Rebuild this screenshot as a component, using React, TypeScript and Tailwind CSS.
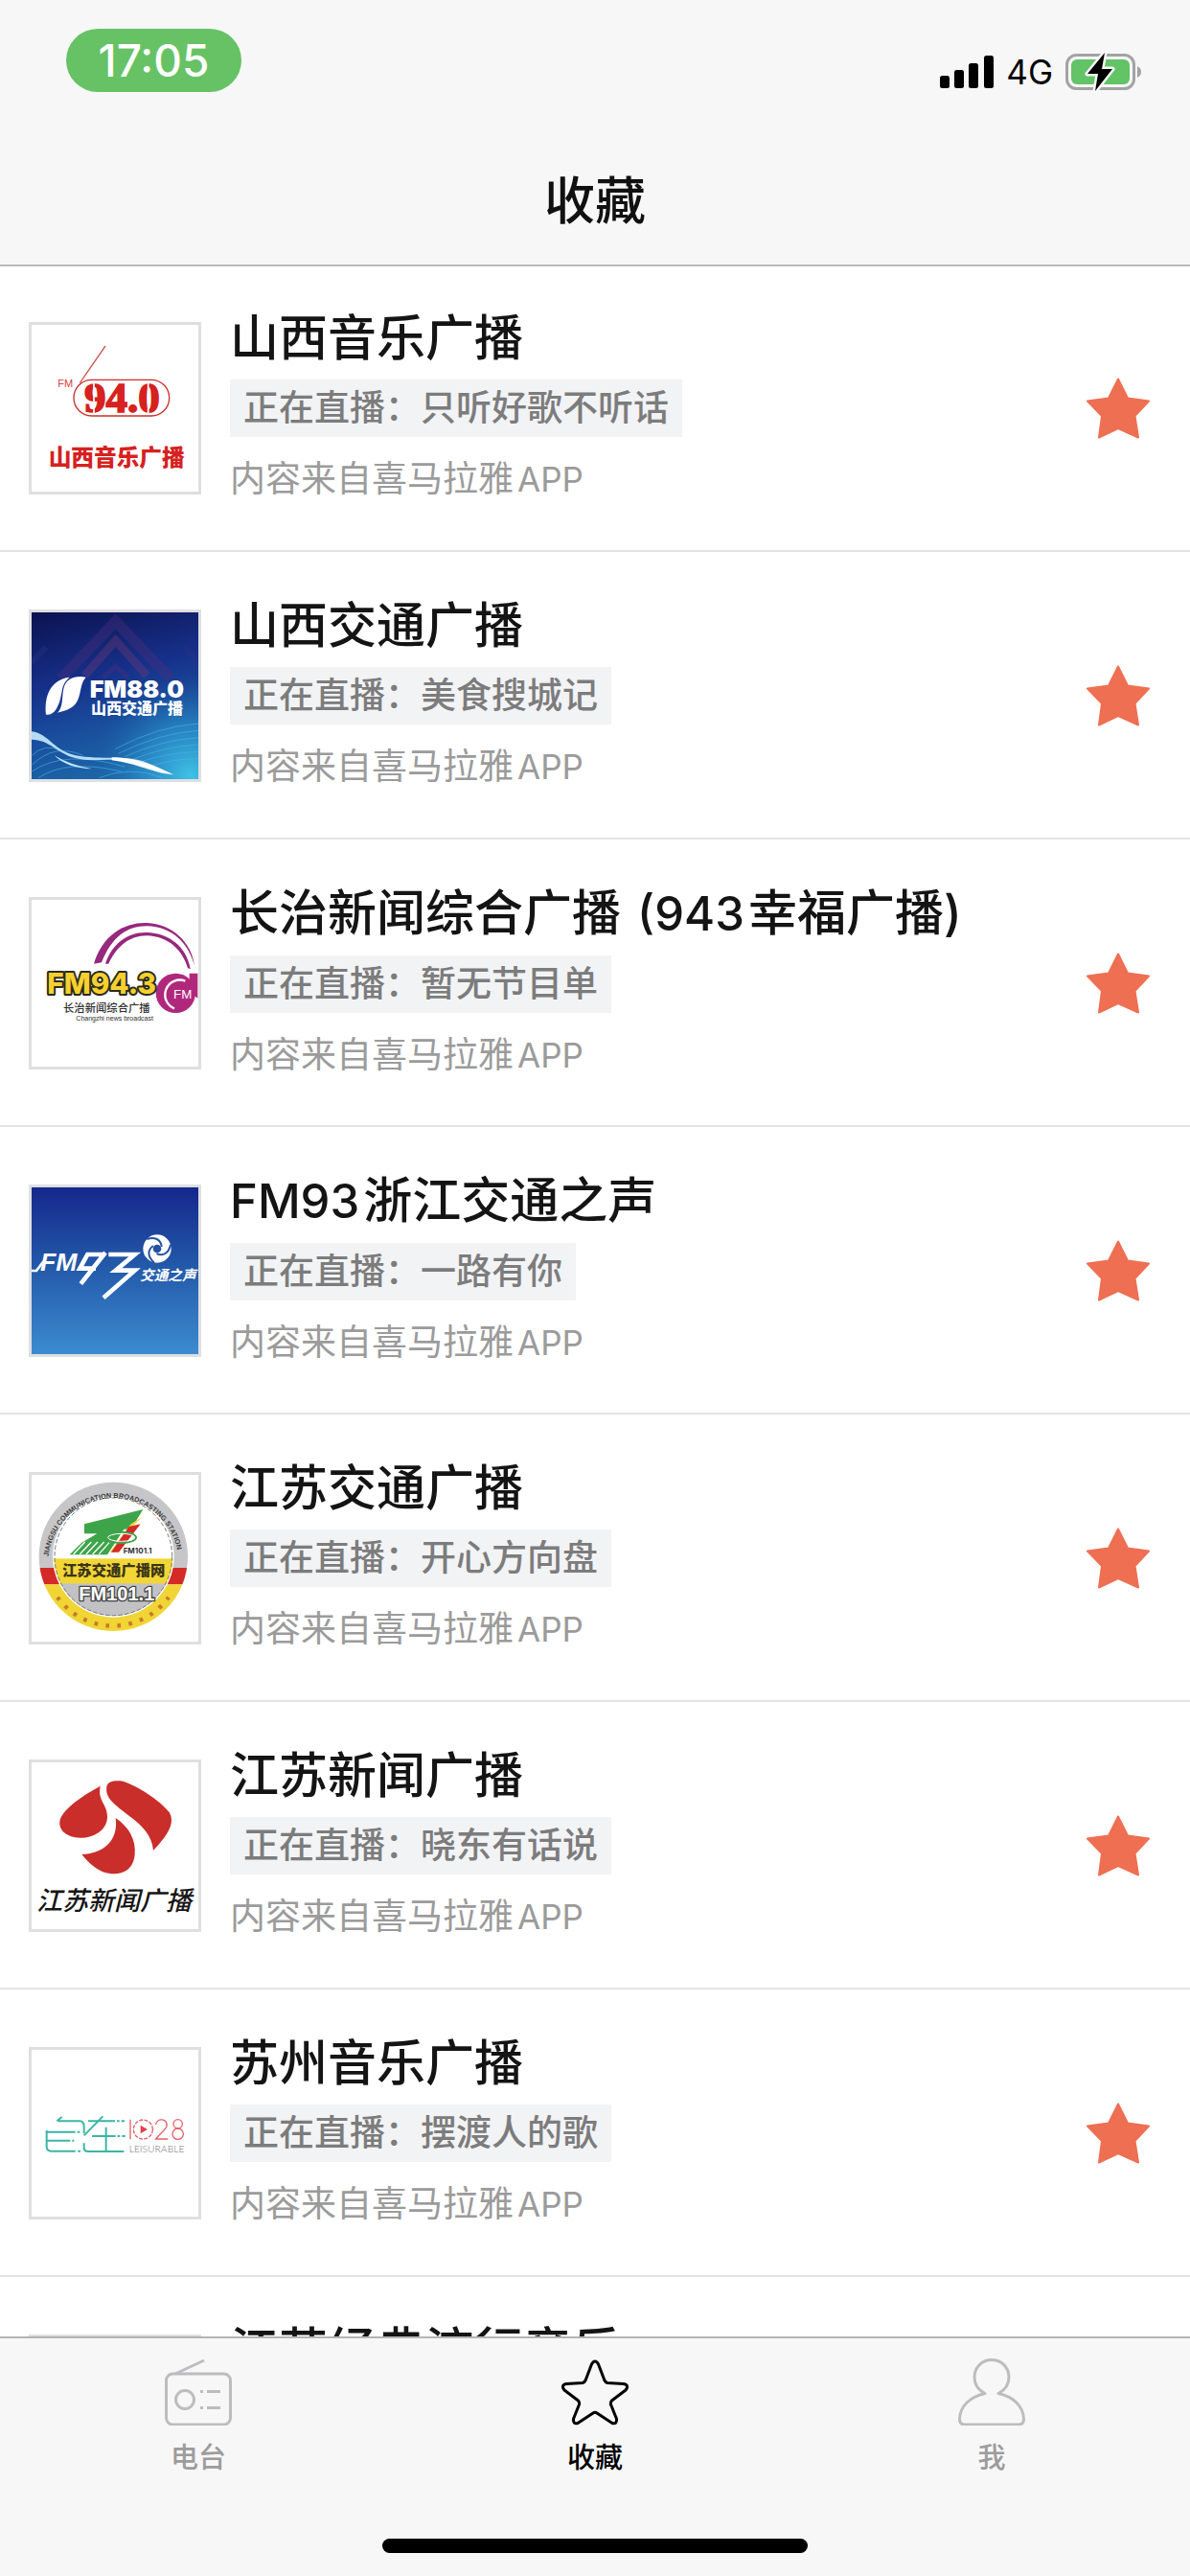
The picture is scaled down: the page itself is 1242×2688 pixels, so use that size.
import type { ReactNode } from "react";

const SC = '"Noto Sans CJK SC", sans-serif';
const LATIN = 'Inter, "Noto Sans CJK SC", sans-serif';
const SERIF = '"Liberation Serif", serif';

function LogoFrame({ label, children }: { label: string; children: ReactNode }) {
  return (
    <div className="size-[180px] shrink-0 border-3 border-[#dfdfe1] bg-white">
      <svg viewBox="39 42 522 522" className="block size-full" role="img" aria-label={label}>
        {children}
      </svg>
    </div>
  );
}

function ShanxiMusicLogo() {
  return (
    <LogoFrame label="山西音乐广播">
      <path d="M190 224L270 108" stroke="#cf5a56" strokeWidth="4" fill="none" />
      <rect x="171" y="214" width="299" height="113" rx="56" fill="none" stroke="#c9302c" strokeWidth="4" />
      <text x="121" y="236" fontFamily="Liberation Sans, sans-serif" fontSize="33" fill="#d3403c">FM</text>
      <text x="204" y="314" fontFamily={SERIF} fontWeight="700" fontSize="135" fill="#d6211f" stroke="#d6211f" strokeWidth="5">94.0</text>
      <path d="M234 220V320M404 220V320" stroke="#fff" strokeWidth="5" />
      <text x="92" y="483" fontFamily={SC} fontWeight="900" fontSize="71" fill="#d6211f">山西音乐广播</text>
    </LogoFrame>
  );
}

function ShanxiTrafficLogo() {
  return (
    <LogoFrame label="山西交通广播 FM88.0">
      <defs>
        <linearGradient id="night" x1="0" y1="0" x2="0.25" y2="1">
          <stop offset="0" stopColor="#0c1250" />
          <stop offset="0.45" stopColor="#16308a" />
          <stop offset="0.75" stopColor="#1a4f9e" />
          <stop offset="1" stopColor="#1b63a6" />
        </linearGradient>
        <radialGradient id="glow" cx="0.95" cy="0.98" r="0.6">
          <stop offset="0" stopColor="#3fc3e6" />
          <stop offset="0.5" stopColor="#2f9ad4" stopOpacity="0.6" />
          <stop offset="1" stopColor="#1b63a6" stopOpacity="0" />
        </radialGradient>
      </defs>
      <rect x="39" y="42" width="522" height="522" fill="url(#night)" />
      <rect x="39" y="42" width="522" height="522" fill="url(#glow)" />
      <g fill="none" stroke="#4a2f7c" opacity="0.4">
        <path d="M130 250L302 70L475 250" strokeWidth="34" />
        <path d="M205 240L302 130L400 240" strokeWidth="26" stroke="#6d3a78" />
        <path d="M262 245L302 212L342 245" strokeWidth="16" />
        <path d="M84 150L39 200M520 150L561 200" strokeWidth="18" stroke="#2c2f86" />
      </g>
      <g fill="none" stroke="#49b5e4" strokeWidth="3" opacity="0.6">
        <path d="M300 470Q430 400 561 390M310 484Q440 420 561 412M330 494Q450 440 561 434M350 504Q460 460 561 456M380 510Q470 480 561 478M420 520Q490 500 561 500" />
        <path d="M60 560Q150 500 320 540M40 540Q140 470 330 525M40 520Q110 450 200 490M250 560Q350 520 450 560M40 490Q80 450 130 475" />
      </g>
      <path d="M39 415C95 420 105 480 190 492S340 488 400 512S470 548 492 550C430 552 395 520 330 508S230 512 175 498S95 440 39 440Z" fill="#b4dcf5" />
      <path d="M110 490Q150 530 228 532Q160 520 110 490Z" fill="#bfe9fb" />
      <path d="M290 496C350 492 420 520 480 548C420 545 370 515 290 505Z" fill="#fff" />
      <path d="M84 362C78 300 100 252 158 245C124 272 142 300 116 345C108 358 96 364 84 362Z" fill="#fff" />
      <path d="M120 356C150 330 118 262 170 246Q190 240 209 245C188 268 196 300 178 326C164 346 140 350 120 356Z" fill="#fff" />
      <text x="221" y="310" fontFamily={LATIN} fontWeight="900" fontSize="75" fill="#fff">FM88.0</text>
      <text x="225" y="359" fontFamily={SC} fontWeight="900" fontSize="48" fill="#fff">山西交通广播</text>
    </LogoFrame>
  );
}

function ChangzhiNewsLogo() {
  return (
    <LogoFrame label="长治新闻综合广播 FM94.3">
      <path d="M234 242C262 150 330 112 400 114C480 118 540 175 549 248C530 178 480 126 400 124C335 124 290 160 258 238Z" fill="#96297d" />
      <path d="M270 242C290 180 340 142 400 144C470 146 525 190 536 258L528 256C512 200 468 156 400 154C345 154 305 188 280 242Z" fill="#96297d" />
      <circle cx="490" cy="334" r="62" fill="#b0287c" />
      <path d="M533 272H559V350L533 330Z" fill="#b0287c" />
      <path d="M520 296A46 46 0 0 0 486 382" fill="none" stroke="#fff" strokeWidth="7" />
      <text x="483" y="350" fontFamily="Liberation Sans, sans-serif" fontSize="40" fill="#fff">FM</text>
      <text x="88" y="336" fontFamily={LATIN} fontWeight="800" fontSize="89" fill="#f6d02f" stroke="#2b2b1c" strokeWidth="12" strokeLinejoin="round" paintOrder="stroke">FM94.3</text>
      <text x="138" y="392" fontFamily={SC} fontWeight="500" fontSize="34" fill="#2e2e2e">长治新闻综合广播</text>
      <text x="178" y="419" fontFamily="Liberation Sans, sans-serif" fontSize="21" fill="#2e2e2e">Changzhi news broadcast</text>
    </LogoFrame>
  );
}

function ZhejiangTrafficLogo() {
  return (
    <LogoFrame label="FM93 交通之声">
      <defs>
        <linearGradient id="sky" x1="0" y1="0" x2="0" y2="1">
          <stop offset="0" stopColor="#15278c" />
          <stop offset="0.45" stopColor="#2257a8" />
          <stop offset="1" stopColor="#3c8bd0" />
        </linearGradient>
      </defs>
      <rect x="39" y="42" width="522" height="522" fill="url(#sky)" />
      <path d="M39 303H54L76 274" fill="none" stroke="#fff" strokeWidth="8" />
      <text x="66" y="304" fontFamily="Liberation Sans, sans-serif" fontStyle="italic" fontWeight="700" fontSize="80" fill="#fff">FM</text>
      <g fill="none" stroke="#fff" strokeWidth="14" strokeLinejoin="miter">
        <path d="M270 252H214L190 296H240M270 246L193 344" />
        <path d="M280 252H362L302 302H362L264 388" />
      </g>
      <circle cx="432" cy="234" r="44" fill="#fff" />
      <g fill="none" stroke="#2450a2" strokeWidth="6">
        <path d="M446 228C444 204 424 196 400 204" />
        <path d="M446 228C444 204 424 196 400 204" transform="rotate(120 432 234)" />
        <path d="M446 228C444 204 424 196 400 204" transform="rotate(240 432 234)" />
      </g>
      <circle cx="432" cy="234" r="13" fill="#2450a2" />
      <text x="378" y="333" fontFamily={SC} fontStyle="italic" fontWeight="700" fontSize="44" fill="#fff">交通之声</text>
    </LogoFrame>
  );
}

function JiangsuTrafficLogo() {
  return (
    <LogoFrame label="江苏交通广播网 FM101.1">
      <defs>
        <path id="ring" d="M91 318A204 204 0 1 1 499 318" />
        <clipPath id="disc"><circle cx="295" cy="298" r="233" /></clipPath>
        <clipPath id="core"><circle cx="295" cy="298" r="186" /></clipPath>
      </defs>
      <g clipPath="url(#disc)">
        <rect x="60" y="60" width="470" height="274" fill="#c6c6c8" />
        <rect x="60" y="333" width="470" height="52" fill="#d42b26" />
        <rect x="60" y="385" width="470" height="150" fill="#f0d535" />
      </g>
      <circle cx="295" cy="298" r="190" fill="#fff" />
      <g clipPath="url(#core)">
        <rect x="105" y="304" width="380" height="80" fill="#f2d636" />
        <rect x="105" y="382" width="380" height="110" fill="#c2c2c4" />
      </g>
      <circle cx="295" cy="298" r="184" fill="none" stroke="#777" strokeWidth="3" strokeDasharray="13 7" />
      <path d="M388 150L350 212H328L276 292H158L196 254L244 226H204V196Z" fill="#3da44a" />
      <path d="M170 290L206 252M190 290L226 252M210 290L246 252M230 290L266 252M250 290L282 254" stroke="#fff" strokeWidth="4" />
      <path d="M388 172L362 196L300 284H284L350 196Z" fill="#f2d636" />
      <path d="M380 196L312 284H288L344 204Z" fill="#d42b26" />
      <ellipse cx="320" cy="238" rx="46" ry="17" fill="none" stroke="#3da44a" strokeWidth="6" />
      <ellipse cx="320" cy="238" rx="42" ry="12" fill="none" stroke="#fff" strokeWidth="3" />
      <text x="326" y="287" fontFamily={LATIN} fontWeight="700" fontSize="24" fill="#333">FM101.1</text>
      <text fontFamily="Liberation Sans, sans-serif" fontWeight="700" fontSize="22" fill="#3c3c3c">
        <textPath href="#ring" startOffset="20">JIANGSU COMMUNICATION BROADCASTING STATION</textPath>
      </text>
      <text x="135" y="358" fontFamily={SC} fontWeight="900" fontSize="46" fill="#3a3418">江苏交通广播网</text>
      <text x="187" y="434" fontFamily="Liberation Sans, sans-serif" fontWeight="700" fontSize="60" fill="#fff" stroke="#444" strokeWidth="8" strokeLinejoin="round" paintOrder="stroke">FM101.1</text>
      <path d="M120 425A214 214 0 0 0 468 425" fill="none" stroke="#c97a28" strokeWidth="13" strokeDasharray="11 25" />
    </LogoFrame>
  );
}

function JiangsuNewsLogo() {
  return (
    <LogoFrame label="江苏新闻广播">
      <g fill="#c92e2a">
        <path d="M254 116C245 165 276 170 276 212C276 255 232 279 190 278C150 277 124 255 127 228C130 195 190 150 254 116Z" />
        <path d="M274 118C278 100 300 98 325 101C370 115 440 160 470 198C490 232 465 270 420 318C416 270 385 240 345 210C300 175 268 155 274 118Z" />
        <path d="M302 216C345 245 366 285 362 330C358 375 330 392 290 391C250 388 220 360 196 330C260 328 312 290 302 216Z" />
      </g>
      <text x="54" y="504" fontFamily={SC} fontStyle="italic" fontWeight="500" fontSize="81" fill="#161616">江苏新闻广播</text>
    </LogoFrame>
  );
}

function SuzhouMusicLogo() {
  return (
    <LogoFrame label="自在 1028 LEISURABLE">
      <g fill="none" stroke="#3db5a4" strokeWidth="6">
        <path d="M118 265L134 252M122 265H190Q202 266 203 280V304M86 294V346Q87 358 100 359H176M86 299H176M88 326H160M166 326H172" />
        <path d="M182 299H190M184 359H192M216 265H300M306 265H314M320 265H330M262 250L203 310M203 334V350Q204 360 216 360H328M272 284V358M228 312H302M308 312H316M322 312H332" />
      </g>
      <g fill="none" stroke="#e2606a" strokeWidth="4">
        <path d="M348 260V322" />
        <circle cx="388" cy="291" r="30" strokeDasharray="12 4" />
        <path d="M428 276C430 254 466 256 462 280C460 292 436 308 428 321H466" />
        <circle cx="497" cy="274" r="14" />
        <circle cx="497" cy="305" r="17" />
      </g>
      <path d="M380 278L402 291L380 304Z" fill="#e2404c" />
      <text x="344" y="364" fontFamily="Lato, sans-serif" fontWeight="300" fontSize="31" fill="#777">LEISURABLE</text>
    </LogoFrame>
  );
}

type Run = { text: string; latin?: boolean };
type Station = { id: string; title: Run[]; program: string; logo: ReactNode };

const stations: Station[] = [
  { id: "sx-music", title: [{ text: "山西音乐广播" }], program: "只听好歌不听话", logo: <ShanxiMusicLogo /> },
  { id: "sx-traffic", title: [{ text: "山西交通广播" }], program: "美食搜城记", logo: <ShanxiTrafficLogo /> },
  {
    id: "cz-news",
    title: [{ text: "长治新闻综合广播" }, { text: " (943", latin: true }, { text: "幸福广播)" }],
    program: "暂无节目单",
    logo: <ChangzhiNewsLogo />,
  },
  {
    id: "zj-traffic",
    title: [{ text: "FM93", latin: true }, { text: "浙江交通之声" }],
    program: "一路有你",
    logo: <ZhejiangTrafficLogo />,
  },
  { id: "js-traffic", title: [{ text: "江苏交通广播" }], program: "开心方向盘", logo: <JiangsuTrafficLogo /> },
  { id: "js-news", title: [{ text: "江苏新闻广播" }], program: "晓东有话说", logo: <JiangsuNewsLogo /> },
  { id: "sz-music", title: [{ text: "苏州音乐广播" }], program: "摆渡人的歌", logo: <SuzhouMusicLogo /> },
  {
    id: "js-classic",
    title: [{ text: "江苏经典流行音乐" }],
    program: "暂无节目单",
    logo: <LogoFrame label="江苏经典流行音乐">{null}</LogoFrame>,
  },
];

function StationRow({ station }: { station: Station }) {
  return (
    <li className="flex h-[300px] shrink-0 items-center gap-[30px] border-b-2 border-[#e3e3e5] px-[30px] pt-0.5">
      {station.logo}
      <div className="flex min-w-0 flex-1 flex-col items-start">
        <h2 className="flex items-baseline gap-1 text-[51px] leading-[58px] font-medium whitespace-pre text-[#141414]">
          {station.title.map((run) => (
            <span key={run.text} className={run.latin ? "text-[49px]" : undefined}>
              {run.text}
            </span>
          ))}
        </h2>
        <p className="mt-3.5 bg-[#f2f3f5] px-3.5 text-[37px] leading-[60px] font-medium whitespace-nowrap text-[#7c7c7c]">
          正在直播：{station.program}
        </p>
        <p className="mt-4 flex items-baseline gap-1 text-[37px] leading-[56px] whitespace-nowrap text-[#9b9b9b]">
          <span>内容来自喜马拉雅</span>
          <span className="text-[35px]">APP</span>
        </p>
      </div>
      <button type="button" aria-label="取消收藏" className="mr-3 shrink-0">
        <svg viewBox="0 0 66 64" className="block h-16 w-[66px]">
          <path
            d="M33 1.500L43 21.500L65 24.500L50.500 40L54 62.500L33 53L13 62.500L16 40L1 24.500L23 21.500Z"
            fill="#ee6f52"
            stroke="#ee6f52"
            strokeWidth="2"
            strokeLinejoin="round"
          />
        </svg>
      </button>
    </li>
  );
}

function StatusBar() {
  return (
    <div className="flex items-start justify-between pt-[30px] pr-[50px] pl-[69px]">
      <div className="flex h-[66px] w-[183px] items-center justify-center rounded-full bg-[#66c265] text-[46px] leading-none font-medium text-white">
        17:05
      </div>
      <div className="mt-[26px] flex h-[38px] items-center gap-[13px]">
        <svg viewBox="0 0 56 34" className="h-[34px] w-14" aria-label="信号">
          <rect x="0" y="21" width="10" height="13" rx="2.500" />
          <rect x="15" y="15" width="10" height="19" rx="2.500" />
          <rect x="30" y="8" width="10" height="26" rx="2.500" />
          <rect x="46" y="0" width="10" height="34" rx="2.500" />
        </svg>
        <span className="text-[35px] leading-none">4G</span>
        <svg viewBox="0 0 80 40" className="h-10 w-20" aria-label="电池充电中">
          <rect x="1.500" y="2.500" width="70" height="35" rx="10" fill="none" stroke="#a3a3a5" strokeWidth="3" />
          <rect x="6" y="7" width="61" height="26" rx="6" fill="#62c466" />
          <path d="M75 14Q79 16 79 20T75 26Z" fill="#a3a3a5" />
          <path
            d="M41 0L23 22H34L31 40L49 17H38Z"
            fill="#000"
            stroke="#f7f7f7"
            strokeWidth="5"
            strokeLinejoin="round"
            paintOrder="stroke"
          />
        </svg>
      </div>
    </div>
  );
}

const tabs = [
  {
    label: "电台",
    active: false,
    icon: (
      <>
        <rect x="1.500" y="16" width="67" height="53" rx="7" />
        <path d="M11 16L41 2" />
        <circle cx="21" cy="43" r="9.500" />
        <path d="M37 34.500H40M44 34.500H58M37 51.500H40M44 51.500H58" />
      </>
    ),
  },
  {
    label: "收藏",
    active: true,
    icon: (
      <path d="M35 3Q37 3 38.500 6L45 23Q46 25 48 25.500L65 26.500Q71 28 67 33L52.500 44Q51 46 51.500 48L57.500 63Q58 69 53 67.500L37 57Q35 55.500 33 57L17 67.500Q12 69 12.500 63L18.500 48Q19 46 17.500 44L3 33Q-1 28 5 26.500L22 25.500Q24 25 25 23L31.500 6Q33 3 35 3Z" />
    ),
  },
  {
    label: "我",
    active: false,
    icon: (
      <path d="M28 36.500C20 32.500 17 26 17 19.500C17 9 25 1.500 35 1.500S53 9 53 19.500C53 26 50 32.500 42 36.500C58 40 68 50 68.500 63Q68.500 69 63 69H7Q1.500 69 1.500 63C2 50 12 40 28 36.500Z" />
    ),
  },
];

export default function App() {
  return (
    <div className="flex h-screen flex-col overflow-hidden bg-white font-[Inter,'Noto_Sans_CJK_SC',sans-serif] text-black">
      <header className="shrink-0 border-b-2 border-[#b9b9bb] bg-[#f7f7f7]">
        <StatusBar />
        <h1 className="pt-[76px] pb-7 text-center text-[53px] leading-[76px] font-medium text-[#111]">收藏</h1>
      </header>
      <main className="-mt-0.5 min-h-0 flex-1 overflow-hidden">
        <ul className="flex flex-col">
          {stations.map((station) => (
            <StationRow key={station.id} station={station} />
          ))}
        </ul>
      </main>
      <nav className="shrink-0 border-t-2 border-[#b4b4b6] bg-[#f7f7f7]">
        <div className="grid grid-cols-3 pt-[21px]">
          {tabs.map((tab) => (
            <button
              key={tab.label}
              type="button"
              aria-current={tab.active ? "page" : undefined}
              className={
                tab.active
                  ? "flex flex-col items-center font-medium text-black"
                  : "flex flex-col items-center font-medium text-[#9c9c9c]"
              }
            >
              <svg
                viewBox="0 0 70 70"
                className={tab.active ? "size-[70px] text-black" : "size-[70px] text-[#bdbdbf]"}
                fill="none"
                stroke="currentColor"
                strokeWidth="3"
                strokeLinejoin="round"
              >
                {tab.icon}
              </svg>
              <span className="mt-3 text-[29px] leading-[44px]">{tab.label}</span>
            </button>
          ))}
        </div>
        <div className="mx-auto mt-[62px] mb-6 h-[15px] w-[444px] rounded-full bg-black" />
      </nav>
    </div>
  );
}
